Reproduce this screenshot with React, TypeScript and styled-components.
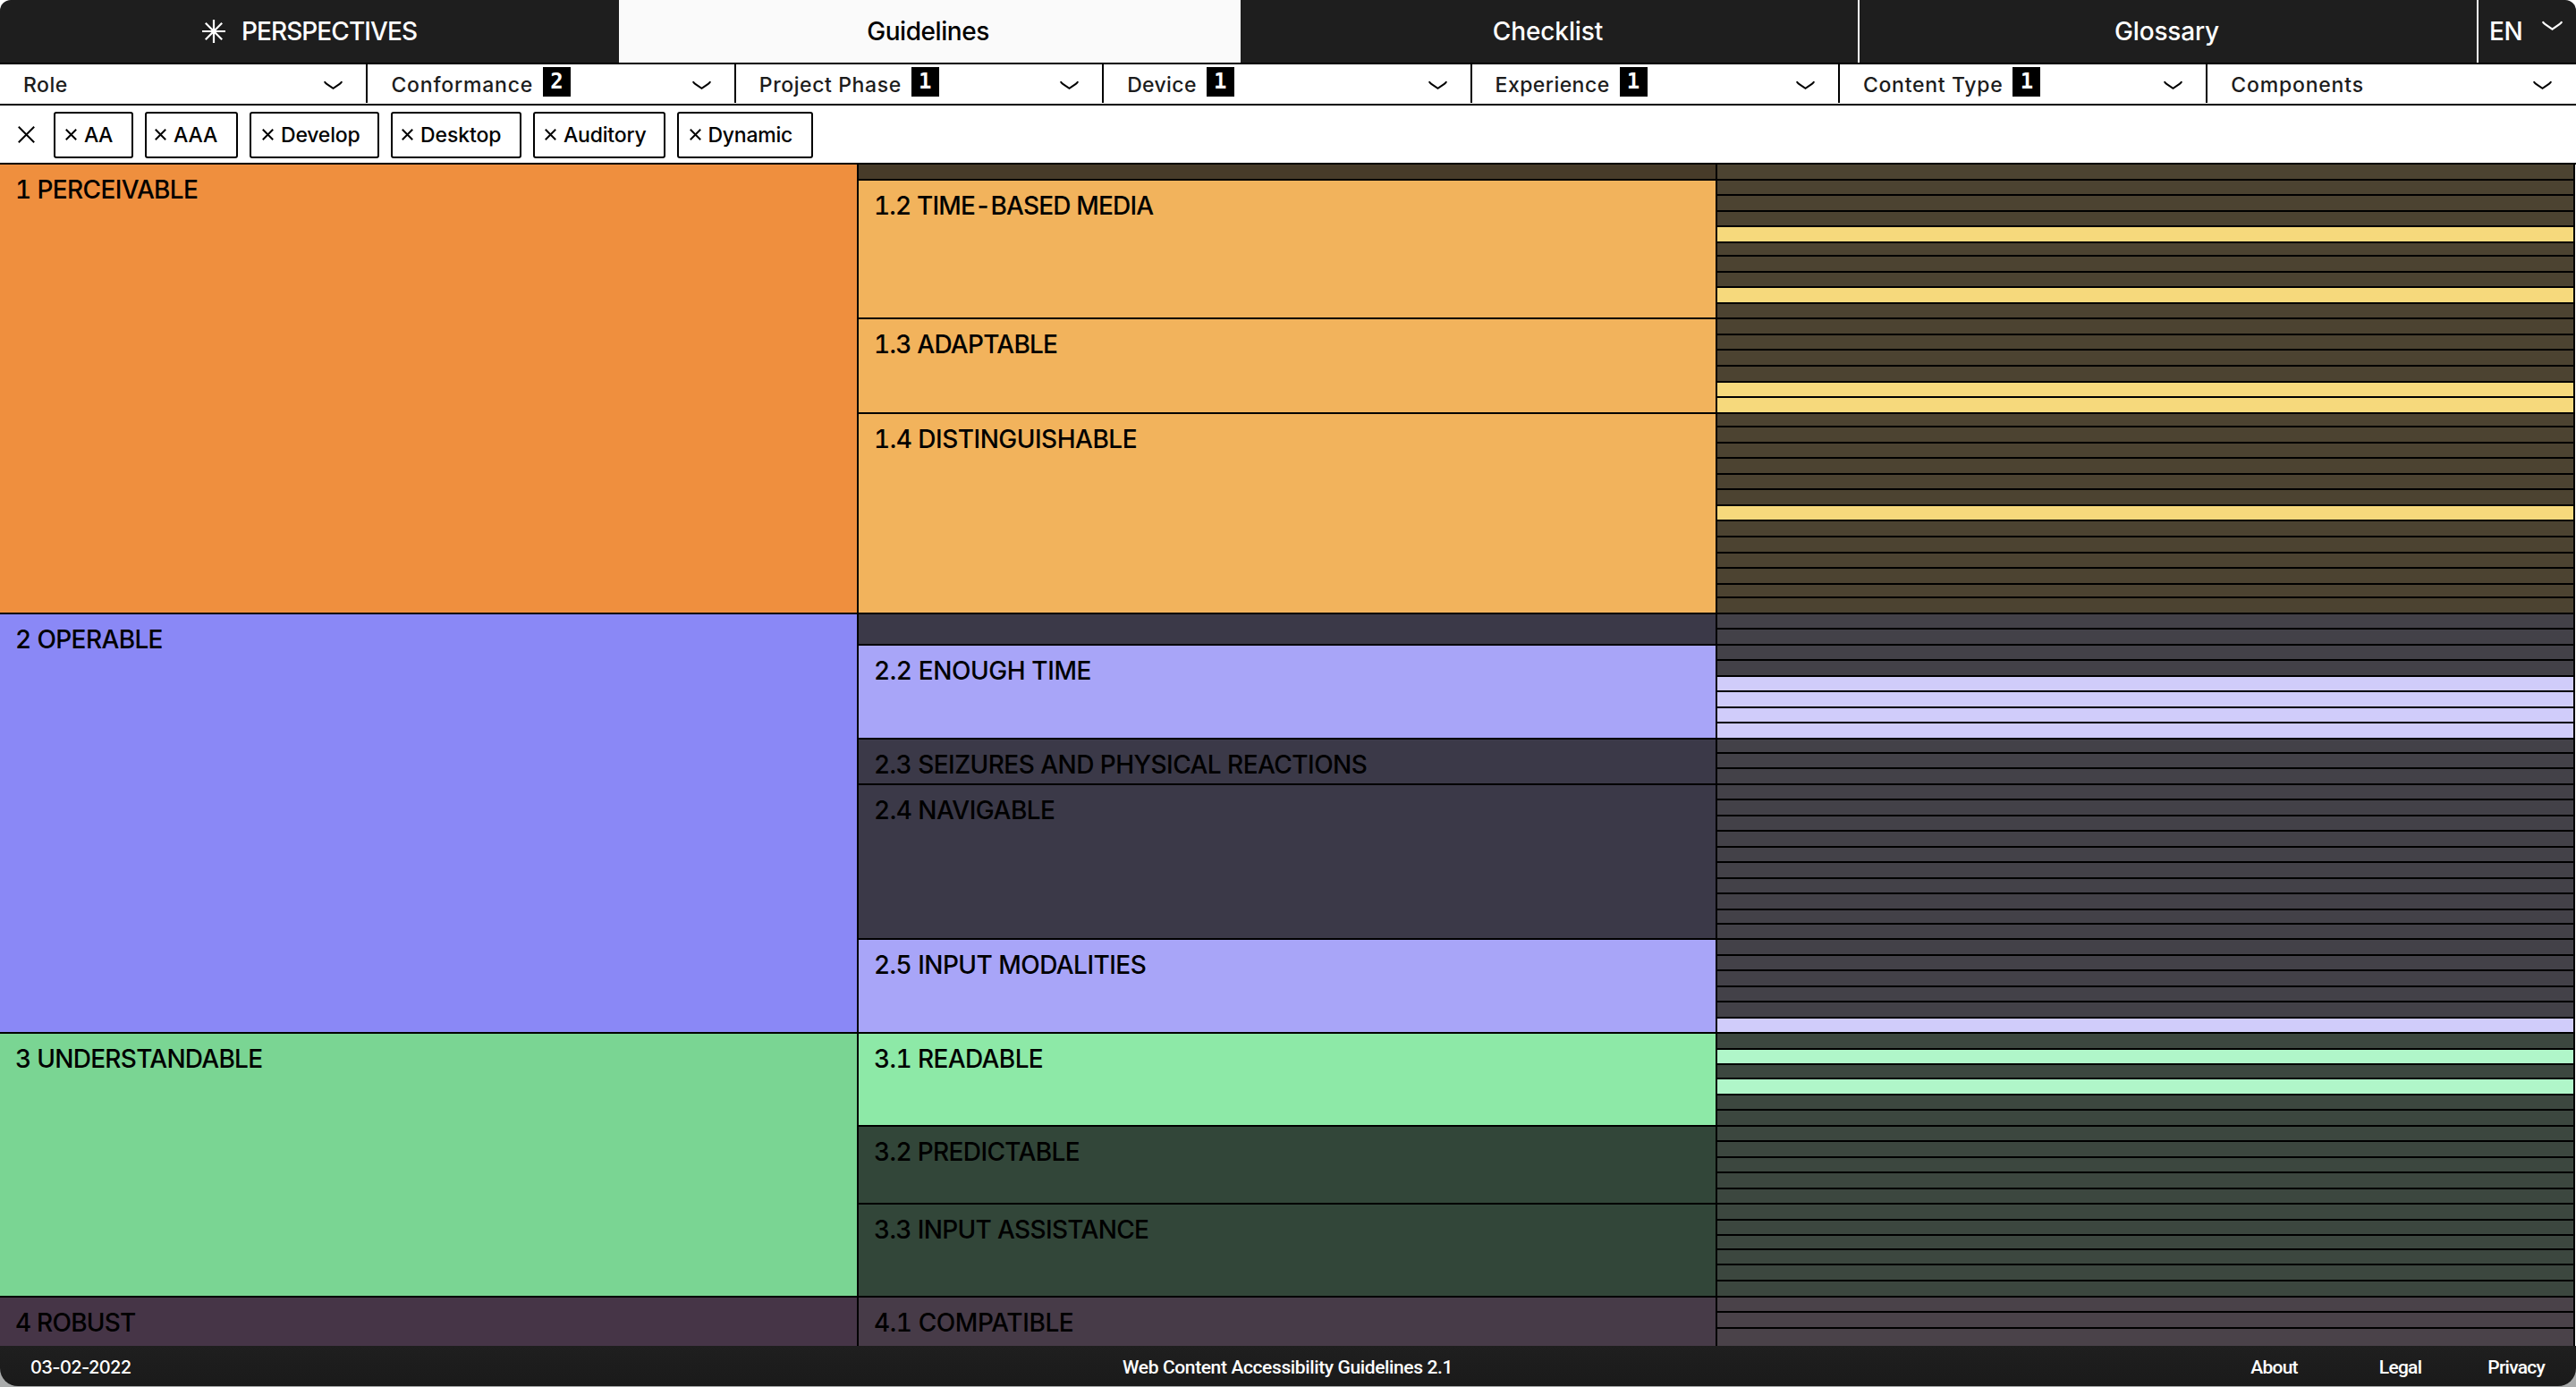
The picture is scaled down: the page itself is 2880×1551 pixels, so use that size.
import React from "react";
import styled, { createGlobalStyle } from "styled-components";

const GlobalStyle = createGlobalStyle`
  *, *::before, *::after { box-sizing: border-box; }
  body {
    margin: 0;
    background: #b4b4b4;
    font-family: Inter, "Liberation Sans", sans-serif;
    color: #000;
  }
`;

const Window = styled.div`
  display: flex;
  flex-direction: column;
  width: 2880px;
  height: 1551px;
  overflow: hidden;
  background: #fff;
`;

/* ---------- navigation ---------- */

const NavBar = styled.nav`
  display: grid;
  grid-template-columns: 692px 695px 692px 692px 1fr;
  flex: none;
  height: 72px;
  border-bottom: 2px solid #000;
  border-radius: 12px 12px 0 0;
  background: #1e1e1e;
`;

const NavTab = styled.a<{ $active?: boolean; $divider?: boolean; $tracking: number }>`
  display: flex;
  align-items: center;
  justify-content: center;
  padding-right: ${(p) => (p.$active ? "4px" : p.$divider ? "3px" : "0")};
  border-right: ${(p) => (p.$divider ? "2px solid #fafafa" : "none")};
  background: ${(p) => (p.$active ? "#fafafa" : "transparent")};
  color: ${(p) => (p.$active ? "#000" : "#fff")};
  font-size: 28px;
  font-weight: 500;
  line-height: 28px;
  letter-spacing: ${(p) => p.$tracking}px;
  white-space: nowrap;
`;

const StarMark = styled.svg`
  width: 26px;
  height: 26px;
  margin-right: 18px;
`;

const Language = styled.div`
  display: flex;
  align-items: center;
  justify-content: space-between;
  padding: 0 15px 0 12px;
  color: #fff;
  font-size: 28px;
  font-weight: 500;
  line-height: 28px;
  letter-spacing: -0.4px;
`;

const LanguageArrow = styled.span`
  display: flex;
  padding-bottom: 12px;
`;

/* ---------- filters ---------- */

const FilterBar = styled.div`
  display: grid;
  grid-template-columns: repeat(7, 411.4px);
  flex: none;
  height: 46px;
  padding-bottom: 1px;
  border-bottom: 2px solid #000;
`;

const Filter = styled.div`
  display: flex;
  align-items: center;
  padding: 0 26px 0 26px;
  border-right: 2px solid #000;

  &:last-child {
    padding-right: 27px;
    border-right: none;
  }
`;

const FilterName = styled.span<{ $tracking: number }>`
  padding-top: 2px;
  color: #1c1c1c;
  font-size: 23px;
  font-weight: 450;
  line-height: 28px;
  letter-spacing: ${(p) => p.$tracking}px;
  white-space: nowrap;
`;

const FilterCount = styled.span`
  width: 31px;
  height: 33px;
  margin: 0 0 5px 11px;
  background: #000;
  color: #fff;
  font-family: "DejaVu Sans Mono", monospace;
  font-size: 24px;
  font-weight: 700;
  line-height: 32px;
  text-align: center;
`;

const FilterArrow = styled.span`
  display: flex;
  margin-left: auto;
  padding-top: 3px;
`;

/* ---------- selected filters ---------- */

const ChipBar = styled.div`
  display: flex;
  align-items: center;
  flex: none;
  gap: 13px;
  height: 66px;
  padding: 1px 0 0 20px;
  border-bottom: 2px solid #000;
`;

const ClearAll = styled.span`
  display: flex;
  width: 27px;
`;

const Chip = styled.span<{ $width: number; $inset: number; $tracking: number }>`
  display: flex;
  align-items: center;
  gap: 8px;
  width: ${(p) => p.$width}px;
  height: 52px;
  padding: 0 0 1px ${(p) => p.$inset}px;
  border: 2px solid #000;
  border-radius: 3px;
  font-size: 23px;
  font-weight: 500;
  line-height: 28px;
  letter-spacing: ${(p) => p.$tracking}px;
  white-space: nowrap;
`;

const ChipText = styled.span`
  padding-top: 2px;
`;

/* ---------- guideline map ---------- */

const Map = styled.main`
  display: flex;
  flex-direction: column;
  flex: none;
  height: 1321px;
  padding-right: 1px;
`;

const Principle = styled.section`
  display: flex;
  flex: none;

  &:last-child {
    flex: 1;
  }
`;

const Cell = styled.div<{ $fill: string; $tracking?: number; $last?: boolean }>`
  flex: none;
  width: 960px;
  padding: 14px 0 0 17px;
  overflow: hidden;
  border-right: 2px solid #000;
  border-bottom: ${(p) => (p.$last ? "none" : "2px solid #000")};
  background: ${(p) => p.$fill};
  font-size: 28px;
  font-weight: 500;
  font-variant-numeric: tabular-nums;
  line-height: 28px;
  letter-spacing: ${(p) => p.$tracking ?? 0}px;
  white-space: nowrap;
`;

const Guidelines = styled.div`
  display: flex;
  flex: 1;
  flex-direction: column;
`;

const Guideline = styled.section`
  display: flex;
  flex: 1 0 auto;
`;

const Criteria = styled.div`
  display: flex;
  flex: 1;
  flex-direction: column;
  border-right: 2px solid #000;
`;

const Criterion = styled.div<{ $fill: string; $short: boolean; $last: boolean }>`
  flex: ${(p) => (p.$last ? "1" : "none")};
  height: ${(p) => (p.$short ? 15.65 : 17.54)}px;
  border-bottom: ${(p) => (p.$last ? "none" : "2px solid #000")};
  background: ${(p) => p.$fill};
`;

/* ---------- footer ---------- */

const FooterWell = styled.div`
  flex: none;
  height: 46px;
  padding-bottom: 1px;
  background: #a9abab;
`;

const FooterBar = styled.footer`
  display: flex;
  align-items: center;
  height: 45px;
  padding: 2px 35px 0 34px;
  border-radius: 0 0 20px 20px;
  background: linear-gradient(#1f1f1f, #1a1a1a);
  color: #fff;
  font-family: Roboto, "Liberation Sans", sans-serif;
  font-size: 21px;
  font-weight: 500;
  line-height: 26px;
`;

const FooterDate = styled.span`
  flex: 1;
  font-family: Inter, sans-serif;
  font-size: 20px;
  letter-spacing: -0.6px;
`;

const FooterTitle = styled.span`
  letter-spacing: -0.38px;
`;

const FooterLinks = styled.div`
  display: flex;
  flex: 1;
  justify-content: flex-end;
`;

const FooterLink = styled.a<{ $lead: number }>`
  margin-left: ${(p) => p.$lead}px;
  letter-spacing: -0.75px;
`;

/* ---------- icons ---------- */

const Chevron = ({ color = "#000", width = 21 }: { color?: string; width?: number }) => (
  <svg width={width} height={width / 2} viewBox="0 0 22 11" fill="none">
    <path d="M.8 1.2Q1.4 2.6 3.4 4L11 9.2L18.6 4Q20.6 2.6 21.2 1.2" stroke={color} strokeWidth="2.1" />
  </svg>
);

const Cross = ({ size, stroke }: { size: number; stroke: number }) => (
  <svg width={size} height={size} viewBox={`0 0 ${size} ${size}`} fill="none">
    <path
      d={`M.8 .8L${size - 0.8} ${size - 0.8}M${size - 0.8} .8L.8 ${size - 0.8}`}
      stroke="#000"
      strokeWidth={stroke}
    />
  </svg>
);

const Star = () => (
  <StarMark viewBox="0 0 26 26" fill="none">
    <path d="M13 0V26M0 13H26M3.8 3.8L22.2 22.2M22.2 3.8L3.8 22.2" stroke="#fff" strokeWidth="2.2" />
    <circle cx="13" cy="13" r="2.6" fill="#fff" />
  </StarMark>
);

/* ---------- data ---------- */

const filters = [
  { name: "Role", tracking: 0.5 },
  { name: "Conformance", tracking: 0.8, count: 2 },
  { name: "Project Phase", tracking: 0.6, count: 1 },
  { name: "Device", tracking: 0.35, count: 1 },
  { name: "Experience", tracking: 0.45, count: 1 },
  { name: "Content Type", tracking: 0.7, count: 1 },
  { name: "Components", tracking: 0.8 },
];

const chips = [
  { name: "AA", width: 89, inset: 11, tracking: -0.6 },
  { name: "AAA", width: 104, inset: 9, tracking: -0.2 },
  { name: "Develop", width: 144.5, inset: 12, tracking: -0.2 },
  { name: "Desktop", width: 146, inset: 10.5, tracking: -0.1 },
  { name: "Auditory", width: 148, inset: 11.5, tracking: -0.2 },
  { name: "Dynamic", width: 152.5, inset: 12, tracking: -0.25 },
];

type Group = { label: string; tracking?: number; on: boolean; rows: number; lit?: number[] };

type Section = {
  label: string;
  tracking: number;
  fill: string;
  on: string;
  off: string;
  rowOn: string;
  rowOff: string;
  groups: Group[];
};

const sections: Section[] = [
  {
    label: "1 PERCEIVABLE",
    tracking: -0.63,
    fill: "#ef8f3e",
    on: "#f2b35c",
    off: "#473b29",
    rowOn: "#f6d97c",
    rowOff: "#4c4331",
    groups: [
      { label: "", on: false, rows: 1 },
      { label: "1.2 TIME-BASED MEDIA", tracking: -0.82, on: true, rows: 9, lit: [3, 7] },
      { label: "1.3 ADAPTABLE", tracking: -0.75, on: true, rows: 6, lit: [4, 5] },
      { label: "1.4 DISTINGUISHABLE", tracking: -0.5, on: true, rows: 13, lit: [6] },
    ],
  },
  {
    label: "2 OPERABLE",
    tracking: -0.62,
    fill: "#8a88f6",
    on: "#a8a5f8",
    off: "#3b3948",
    rowOn: "#d0ccfa",
    rowOff: "#434148",
    groups: [
      { label: "", on: false, rows: 2 },
      { label: "2.2 ENOUGH TIME", tracking: -0.41, on: true, rows: 6, lit: [2, 3, 4, 5] },
      { label: "2.3 SEIZURES AND PHYSICAL REACTIONS", tracking: -0.54, on: false, rows: 3 },
      { label: "2.4 NAVIGABLE", tracking: -0.5, on: false, rows: 10 },
      { label: "2.5 INPUT MODALITIES", tracking: -0.54, on: true, rows: 6, lit: [5] },
    ],
  },
  {
    label: "3 UNDERSTANDABLE",
    tracking: -0.72,
    fill: "#7ad593",
    on: "#8de9a7",
    off: "#324639",
    rowOn: "#b0f6c9",
    rowOff: "#3c473f",
    groups: [
      { label: "3.1 READABLE", tracking: -0.6, on: true, rows: 6, lit: [1, 3] },
      { label: "3.2 PREDICTABLE", tracking: -0.64, on: false, rows: 5 },
      { label: "3.3 INPUT ASSISTANCE", tracking: -0.66, on: false, rows: 6 },
    ],
  },
  {
    label: "4 ROBUST",
    tracking: -0.78,
    fill: "#463547",
    on: "#473b48",
    off: "#473b48",
    rowOn: "#4a4249",
    rowOff: "#4a4249",
    groups: [{ label: "4.1 COMPATIBLE", tracking: -0.42, on: false, rows: 3 }],
  },
];

const shortRows = new Set([6, 17, 28, 38, 49, 59, 70]);

const firstRow = (s: number, g: number) =>
  sections.slice(0, s).reduce((sum, sec) => sum + sec.groups.reduce((n, x) => n + x.rows, 0), 0) +
  sections[s].groups.slice(0, g).reduce((n, x) => n + x.rows, 0);

export default function App() {
  return (
    <Window>
      <GlobalStyle />
      <NavBar>
        <NavTab $tracking={-0.92}>
          <Star />
          PERSPECTIVES
        </NavTab>
        <NavTab $active $tracking={-0.44}>Guidelines</NavTab>
        <NavTab $divider $tracking={-0.1}>Checklist</NavTab>
        <NavTab $divider $tracking={-0.17}>Glossary</NavTab>
        <Language>
          EN
          <LanguageArrow>
            <Chevron color="#fff" width={23} />
          </LanguageArrow>
        </Language>
      </NavBar>

      <FilterBar>
        {filters.map((f) => (
          <Filter key={f.name}>
            <FilterName $tracking={f.tracking}>{f.name}</FilterName>
            {f.count && <FilterCount>{f.count}</FilterCount>}
            <FilterArrow>
              <Chevron />
            </FilterArrow>
          </Filter>
        ))}
      </FilterBar>

      <ChipBar>
        <ClearAll>
          <Cross size={19} stroke={2} />
        </ClearAll>
        {chips.map((c) => (
          <Chip key={c.name} $width={c.width} $inset={c.inset} $tracking={c.tracking}>
            <Cross size={13} stroke={2} />
            <ChipText>{c.name}</ChipText>
          </Chip>
        ))}
      </ChipBar>

      <Map>
        {sections.map((s, si) => {
          const closing = si === sections.length - 1;
          return (
            <Principle key={s.label}>
              <Cell $fill={s.fill} $tracking={s.tracking} $last={closing}>{s.label}</Cell>
              <Guidelines>
                {s.groups.map((g, gi) => (
                  <Guideline key={gi}>
                    <Cell $fill={g.on ? s.on : s.off} $tracking={g.tracking} $last={closing}>
                      {g.label}
                    </Cell>
                    <Criteria>
                      {Array.from({ length: g.rows }, (_, r) => (
                        <Criterion
                          key={r}
                          $fill={g.lit?.includes(r) ? s.rowOn : s.rowOff}
                          $short={shortRows.has(firstRow(si, gi) + r + 1)}
                          $last={closing && r === g.rows - 1}
                        />
                      ))}
                    </Criteria>
                  </Guideline>
                ))}
              </Guidelines>
            </Principle>
          );
        })}
      </Map>

      <FooterWell>
        <FooterBar>
          <FooterDate>03-02-2022</FooterDate>
          <FooterTitle>Web Content Accessibility Guidelines 2.1</FooterTitle>
          <FooterLinks>
            <FooterLink $lead={0}>About</FooterLink>
            <FooterLink $lead={91}>Legal</FooterLink>
            <FooterLink $lead={74}>Privacy</FooterLink>
          </FooterLinks>
        </FooterBar>
      </FooterWell>
    </Window>
  );
}
